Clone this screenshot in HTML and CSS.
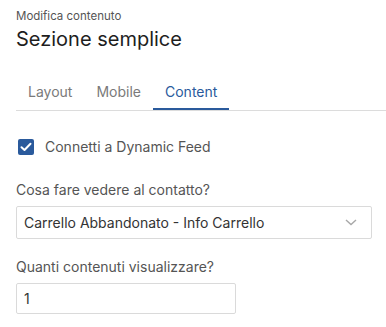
FILE: index.html
```html
<!DOCTYPE html>
<html lang="it">
    <head>
        <meta charset="UTF-8" />
        <meta name="viewport" content="width=device-width, initial-scale=1.0" />
        <title>Modifica contenuto</title>
        <link rel="stylesheet" href="styles.css">
    </head>
    <body>
        <div class="panel">
            <div class="eyebrow">Modifica contenuto</div>
            <h1>Sezione semplice</h1>

            <div class="tabs">
                <div class="tab">Layout</div>
                <div class="tab">Mobile</div>
                <div class="tab active">Content</div>
            </div>

            <label class="check">
                <span class="box">
                    <svg width="12" height="10" viewBox="0 0 12 10">
                        <path d="M1.5 5.2 L4.5 8 L10.5 1.8" fill="none" stroke="#fff" stroke-width="2" stroke-linecap="round" stroke-linejoin="round" />
                    </svg>
                </span>
                Connetti a Dynamic Feed
            </label>

            <div class="field">
                <div class="label">Cosa fare vedere al contatto?</div>
                <div class="select">
                    <span>Carrello Abbandonato - Info Carrello</span>
                    <svg width="12" height="7" viewBox="0 0 12 7">
                        <path d="M1 1 L6 5.5 L11 1" fill="none" stroke="#a8a8a8" stroke-width="1.4" />
                    </svg>
                </div>
            </div>

            <div class="field">
                <div class="label">Quanti contenuti visualizzare?</div>
                <div class="input">1</div>
            </div>
        </div>
    </body>
</html>
```

FILE: styles.css
```css
body {
    font-family: Inter, "Noto Sans", sans-serif;
    margin: 0;
    background: #fff;
    color: #222;
}
.panel {
    padding: 8px 0 0 16px;
}
.eyebrow {
    font-size: 11.5px;
    color: #555;
    line-height: 16px;
}
h1 {
    font-size: 20px;
    font-weight: 400;
    color: #1e1e1e;
    margin: 1px 0 0;
    line-height: 28px;
}
.tabs {
    display: flex;
    margin-top: 29px;
    border-bottom: 1px solid #dcdcdc;
}
.tab {
    font-size: 14px;
    color: #7a7a7a;
    padding: 0 12px;
    height: 28px;
    line-height: 20px;
    box-sizing: border-box;
}
.tab.active {
    color: #2a5a9c;
    border-bottom: 2px solid #2a5a9c;
}
.check {
    display: flex;
    align-items: center;
    gap: 11px;
    margin-top: 26px;
    margin-left: 2px;
    font-size: 14px;
    line-height: 20px;
    color: #555;
}
.box {
    width: 16px;
    height: 16px;
    border-radius: 2px;
    background: #2a5a9c;
    display: flex;
    align-items: center;
    justify-content: center;
}
.field {
    margin-top: 23px;
}
.field + .field {
    margin-top: 18px;
}
.label {
    font-size: 14px;
    color: #555;
    line-height: 20px;
    margin-bottom: 6px;
}
.select {
    width: 356px;
    height: 33px;
    box-sizing: border-box;
    border: 1px solid #dadada;
    border-radius: 2px;
    display: flex;
    align-items: center;
    justify-content: space-between;
    padding: 0 14px 0 7px;
    font-size: 14px;
    color: #333;
}
.input {
    width: 220px;
    height: 31px;
    box-sizing: border-box;
    border: 1px solid #dadada;
    border-radius: 2px;
    display: flex;
    align-items: center;
    padding: 0 7px;
    font-size: 14px;
    color: #333;
}
```
